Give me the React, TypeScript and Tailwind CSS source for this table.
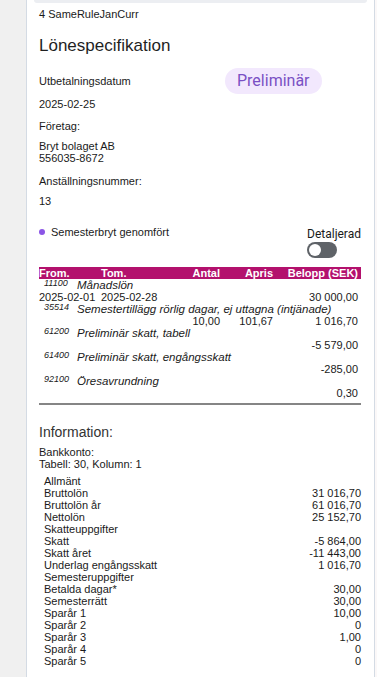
import React from "react";

const rows: { code: string; desc: string; from?: string; tom?: string; antal?: string; apris?: string; belopp: string }[] = [
  { code: "11100", desc: "Månadslön", from: "2025-02-01", tom: "2025-02-28", belopp: "30 000,00" },
  { code: "35514", desc: "Semestertillägg rörlig dagar, ej uttagna (intjänade)", antal: "10,00", apris: "101,67", belopp: "1 016,70" },
  { code: "61200", desc: "Preliminär skatt, tabell", belopp: "-5 579,00" },
  { code: "61400", desc: "Preliminär skatt, engångsskatt", belopp: "-285,00" },
  { code: "92100", desc: "Öresavrundning", belopp: "0,30" },
];

const info: { label: string; value?: string }[] = [
  { label: "Allmänt" },
  { label: "Bruttolön", value: "31 016,70" },
  { label: "Bruttolön år", value: "61 016,70" },
  { label: "Nettolön", value: "25 152,70" },
  { label: "Skatteuppgifter" },
  { label: "Skatt", value: "-5 864,00" },
  { label: "Skatt året", value: "-11 443,00" },
  { label: "Underlag engångsskatt", value: "1 016,70" },
  { label: "Semesteruppgifter" },
  { label: "Betalda dagar*", value: "30,00" },
  { label: "Semesterrätt", value: "30,00" },
  { label: "Sparår 1", value: "10,00" },
  { label: "Sparår 2", value: "0" },
  { label: "Sparår 3", value: "1,00" },
  { label: "Sparår 4", value: "0" },
  { label: "Sparår 5", value: "0" },
];

const grid = "grid grid-cols-[62px_59px_60px_53px_85px_3px]";

export default function App() {
  return (
    <div
      className="flex min-h-[677px] w-[377px] bg-[#f0f0f0] text-[#1a1a1a]"
      style={{ fontFamily: '"Liberation Sans", Arial, sans-serif' }}
    >
      <div className="w-[26px] shrink-0" />
      <div className="w-[349px] shrink-0 border-x border-[#d4dbe4] bg-white">
        <div className="mx-[7px] h-[3px] rounded-b-[3px] bg-[#eceef2]" />
        <div className="pl-[12px] pr-[13px]">
          <div className="mt-[4px] text-[11px] leading-[14px]">4 SameRuleJanCurr</div>
          <div className="mt-[15px] text-[17px] leading-[20px] text-[#1f1f1f]">Lönespecifikation</div>

          <div className="mt-[12px] flex h-[26px] items-center">
            <div className="w-[186px] text-[11px] leading-[14px]">Utbetalningsdatum</div>
            <div
              className="flex h-[26px] items-center rounded-full bg-[#f2e8fd] px-[12px] text-[16px] text-[#7a50c4]"
              style={{ fontFamily: 'Roboto, "Liberation Sans", sans-serif' }}
            >
              Preliminär
            </div>
          </div>
          <div className="mt-[3px] text-[11px] leading-[14px]">2025-02-25</div>

          <div className="mt-[8px] text-[11px] leading-[14px]">Företag:</div>
          <div className="mt-[7px] text-[11px] leading-[12px]">
            <div>Bryt bolaget AB</div>
            <div>556035-8672</div>
          </div>

          <div className="mt-[10px] text-[11px] leading-[14px]">Anställningsnummer:</div>
          <div className="mt-[6px] text-[11px] leading-[14px]">13</div>

          <div className="mt-[17px] flex items-start justify-between">
            <div className="flex items-center gap-[6px] text-[11px] leading-[14px]">
              <span className="h-[6px] w-[6px] rounded-full bg-[#8b55e6]" />
              <span>Semesterbryt genomfört</span>
            </div>
            <div className="mt-[2px] flex flex-col items-start" style={{ fontFamily: 'Roboto, "Liberation Sans", sans-serif' }}>
              <div className="text-[12px] leading-[14px]">Detaljerad</div>
              <div className="mt-[1px] flex h-[16px] w-[30px] items-center rounded-full bg-[#5f6368] px-[2px]">
                <span className="h-[12px] w-[12px] rounded-full bg-white" />
              </div>
            </div>
          </div>

          <div className={`${grid} mt-[9px] bg-[#b3116d] text-[11px] font-bold leading-[12px] text-white`}>
            <div>From.</div>
            <div>Tom.</div>
            <div className="text-right">Antal</div>
            <div className="text-right">Apris</div>
            <div className="text-right">Belopp (SEK)</div>
            <div />
          </div>

          {rows.map((r) => (
            <div key={r.code}>
              <div className="flex items-start italic leading-[12px]">
                <div className="w-[38px] shrink-0 pl-[5px] text-[9px] leading-[9px]">{r.code}</div>
                <div className="whitespace-nowrap text-[11.5px]">{r.desc}</div>
              </div>
              <div className={`${grid} text-[11px] leading-[12px]`}>
                <div>{r.from ?? ""}</div>
                <div>{r.tom ?? ""}</div>
                <div className="text-right">{r.antal ?? ""}</div>
                <div className="text-right">{r.apris ?? ""}</div>
                <div className="text-right">{r.belopp}</div>
                <div />
              </div>
            </div>
          ))}

          <div className="mt-[4px] h-[2px] bg-[#858585]" />

          <div className="mt-[19px] text-[14px] leading-[16px] text-[#333]">Information:</div>
          <div className="mt-[6px] text-[11px] leading-[12px]">
            <div>Bankkonto:</div>
            <div>Tabell: 30, Kolumn: 1</div>
          </div>

          <div className="mt-[5px] pl-[5px] text-[11px] leading-[12px]">
            {info.map((i) => (
              <div key={i.label} className="flex justify-between">
                <span>{i.label}</span>
                <span>{i.value ?? ""}</span>
              </div>
            ))}
          </div>
          <div className="h-[10px]" />
        </div>
      </div>
      <div className="flex-1 bg-[#fbf8f8]" />
    </div>
  );
}
